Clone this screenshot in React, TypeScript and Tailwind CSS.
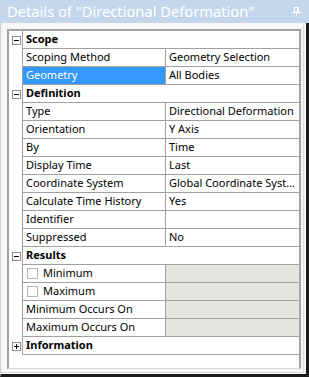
import React from "react";

type Row =
  | { kind: "cat"; label: string; open: boolean }
  | { kind: "prop"; label: string; value: string; selected?: boolean; check?: boolean; gray?: boolean };

const rows: Row[] = [
  { kind: "cat", label: "Scope", open: true },
  { kind: "prop", label: "Scoping Method", value: "Geometry Selection" },
  { kind: "prop", label: "Geometry", value: "All Bodies", selected: true },
  { kind: "cat", label: "Definition", open: true },
  { kind: "prop", label: "Type", value: "Directional Deformation" },
  { kind: "prop", label: "Orientation", value: "Y Axis" },
  { kind: "prop", label: "By", value: "Time" },
  { kind: "prop", label: "Display Time", value: "Last" },
  { kind: "prop", label: "Coordinate System", value: "Global Coordinate Syst..." },
  { kind: "prop", label: "Calculate Time History", value: "Yes" },
  { kind: "prop", label: "Identifier", value: "" },
  { kind: "prop", label: "Suppressed", value: "No" },
  { kind: "cat", label: "Results", open: true },
  { kind: "prop", label: "Minimum", value: "", check: true, gray: true },
  { kind: "prop", label: "Maximum", value: "", check: true, gray: true },
  { kind: "prop", label: "Minimum Occurs On", value: "", gray: true },
  { kind: "prop", label: "Maximum Occurs On", value: "", gray: true },
  { kind: "cat", label: "Information", open: false },
];

function ToggleBox({ open }: { open: boolean }) {
  return (
    <div className="relative w-[9px] h-[9px] border border-[#8c8c8c] bg-white">
      <div className="absolute left-[1px] top-[3px] w-[5px] h-[1px] bg-black" />
      {!open && <div className="absolute left-[3px] top-[1px] w-[1px] h-[5px] bg-black" />}
    </div>
  );
}

function Pin() {
  return (
    <svg width="9" height="9" viewBox="0 0 9 9" className="block">
      <rect x="2.5" y="0.5" width="4" height="5" fill="none" stroke="white" strokeWidth="1" />
      <rect x="5" y="1" width="1" height="4" fill="white" />
      <rect x="0" y="5" width="9" height="1" fill="white" />
      <rect x="4" y="6" width="1" height="3" fill="white" />
    </svg>
  );
}

export default function App() {
  const font = { fontFamily: '"Noto Sans", "Open Sans", sans-serif' };
  return (
    <div className="w-[309px] h-[377px] flex flex-col bg-[#f7f7f7] overflow-hidden" style={font}>
      <div className="h-[23px] shrink-0 bg-[#c3d6ec] flex items-center pl-[7px] pr-[8px]">
        <span className="text-[14.7px] text-white leading-none whitespace-nowrap">Details of "Directional Deformation"</span>
        <div className="ml-auto">
          <Pin />
        </div>
      </div>
      <div className="flex-1 border-r-[3px] border-b-[3px] border-[#1c1c1c] border-l border-l-[#d0d0d0]">
        <div className="w-[303px] h-[350px] border-r border-b border-[#dcdcdc] pl-[6px] pt-[6px]">
          <div className="w-[294px] h-[340px] bg-white border-l-2 border-t-2 border-r-2 border-[#a3a3a3] border-b border-b-[#d6d6d6]">
            {rows.map((r, i) => (
              <div key={i} className="flex h-[18px] text-[11px] text-black">
                <div className="w-[13px] shrink-0 flex items-center pl-[3px]">
                  {r.kind === "cat" && <ToggleBox open={r.open} />}
                </div>
                {r.kind === "cat" ? (
                  <div className="flex-1 border-l border-b border-[#a0a0a0] flex items-center pl-[3px] font-bold">
                    {r.label}
                  </div>
                ) : (
                  <>
                    <div
                      className={`w-[143px] shrink-0 border-l border-b border-[#a0a0a0] flex items-center whitespace-nowrap overflow-hidden ${
                        r.selected ? "bg-[#3399ff] text-white" : ""
                      } ${r.check ? "pl-[4px]" : "pl-[3px]"}`}
                    >
                      {r.check && <div className="w-[11px] h-[11px] border border-[#b4b4b4] bg-white mr-[5px] shrink-0" />}
                      {r.label}
                    </div>
                    <div
                      className={`flex-1 border-l border-b border-[#a0a0a0] flex items-center pl-[3px] whitespace-nowrap overflow-hidden ${
                        r.gray ? "bg-[#e5e4e0]" : ""
                      }`}
                    >
                      {r.value}
                    </div>
                  </>
                )}
              </div>
            ))}
          </div>
        </div>
      </div>
    </div>
  );
}
